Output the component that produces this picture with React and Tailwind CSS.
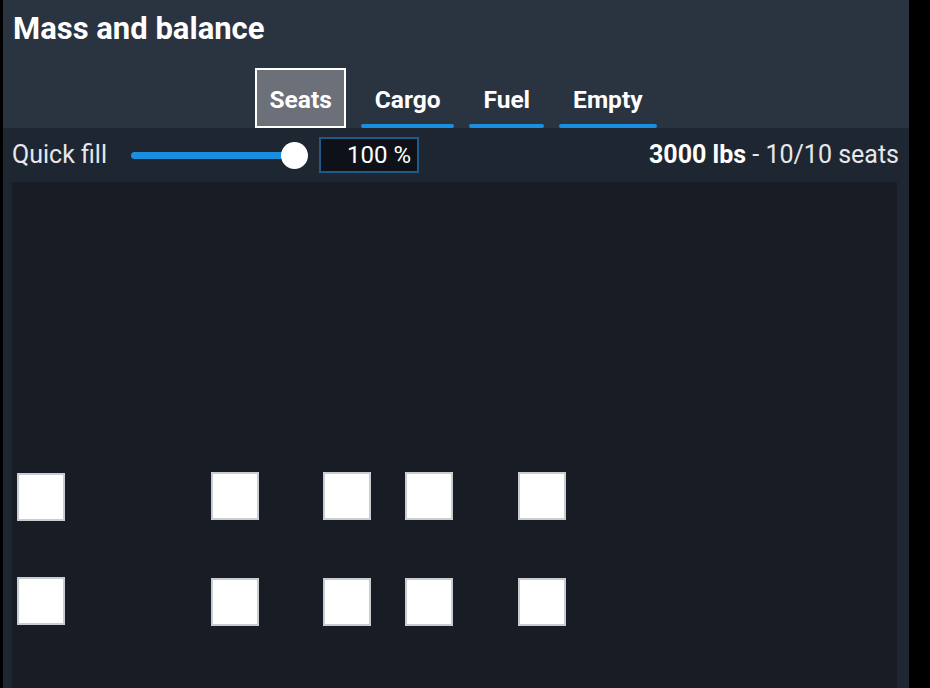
import React from 'react';

const seats = [
  { x: 5, y: 291 },
  { x: 199, y: 290 },
  { x: 311, y: 290 },
  { x: 393, y: 290 },
  { x: 506, y: 290 },
  { x: 5, y: 395 },
  { x: 199, y: 396 },
  { x: 311, y: 396 },
  { x: 393, y: 396 },
  { x: 506, y: 396 },
];

const tabs = ['Seats', 'Cargo', 'Fuel', 'Empty'];

export default function App() {
  return (
    <div className="flex h-[688px] w-[930px] overflow-hidden bg-black font-['Roboto',sans-serif]">
      <div className="ml-[3px] flex w-[906px] flex-col bg-[#1e2632]">
        {/* header */}
        <div className="flex h-[128px] flex-col bg-[#2a3340]">
          <h1 className="pl-[10px] pt-[10px] text-[31px] font-bold leading-[38px] text-white">Mass and balance</h1>
          <div className="mt-auto flex justify-center gap-[15px]">
            {tabs.map((t, i) =>
              i === 0 ? (
                <button
                  key={t}
                  className="h-[60px] border-2 border-white bg-[#6c7079] px-[12px] pt-[5px] text-[24.5px] font-bold text-white"
                >
                  {t}
                </button>
              ) : (
                <button
                  key={t}
                  className="flex h-[60px] flex-col px-[14px] text-[24.5px] font-bold text-white"
                >
                  <span className="flex flex-1 items-center pt-[8px]">{t}</span>
                  <span className="-mx-[14px] h-[4px] self-stretch rounded-full bg-[#1a8fe0]" />
                </button>
              )
            )}
          </div>
        </div>

        {/* quick fill row */}
        <div className="flex h-[54px] items-center pl-[9px] pr-[10px] text-[25px] text-[#e6e8eb]">
          <span>Quick fill</span>
          <div className="relative ml-[24px] h-[7px] w-[164px] rounded-full bg-[#1a8fe0]">
            <div className="absolute -right-[13px] -top-[10px] h-[27px] w-[27px] rounded-full bg-white" />
          </div>
          <div className="ml-[24px] flex h-[36px] w-[100px] items-center justify-end border-2 border-[#1f5a88] bg-[#0e1218] pr-[6px] text-[24px] text-white">
            100 %
          </div>
          <div className="ml-auto">
            <span className="font-bold text-white">3000 lbs</span> - 10/10 seats
          </div>
        </div>

        {/* seat map */}
        <div className="relative ml-[9px] mr-[12px] flex-1 bg-[#171c25]">
          {seats.map((s, i) => (
            <div
              key={i}
              className="absolute h-[48px] w-[48px] border-2 border-[#c9ccd0] bg-white"
              style={{ left: s.x, top: s.y }}
            />
          ))}
        </div>
      </div>
    </div>
  );
}
